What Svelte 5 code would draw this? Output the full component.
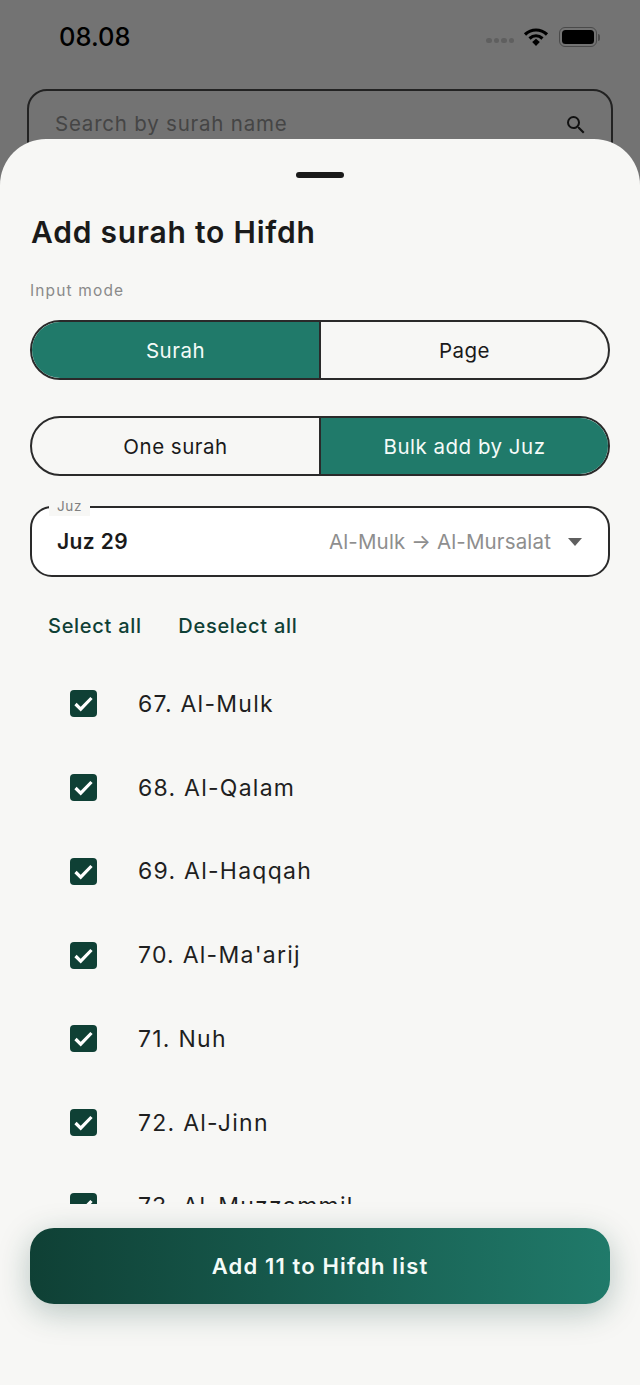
<script>
  const surahs = ['67. Al-Mulk','68. Al-Qalam','69. Al-Haqqah',"70. Al-Ma'arij",'71. Nuh','72. Al-Jinn','73. Al-Muzzammil'];
</script>

<div class="screen">
  <div class="backdrop">
    <div class="status">
      <span class="time">08.08</span>
      <div class="status-icons">
        <div class="dots"><i></i><i></i><i></i><i></i></div>
        <svg class="wifi" width="26" height="20" viewBox="0 0 26 20"><path d="M2 7.5C8.5 1.5 17.5 1.5 24 7.5" fill="none" stroke="#000" stroke-width="3.2"/><path d="M6.5 11.5C10.5 8 15.5 8 19.5 11.5" fill="none" stroke="#000" stroke-width="3.2"/><path d="M9.2 15L13 11.8 16.8 15 13 19z" fill="#000"/></svg>
        <div class="battery"><div class="cell"></div></div>
        <div class="nub"></div>
      </div>
    </div>
    <div class="search">
      <span>Search by surah name</span>
      <svg width="24" height="24" viewBox="0 0 24 24"><path d="M15.5 14h-.79l-.28-.27A6.47 6.47 0 0 0 16 9.5 6.5 6.5 0 1 0 9.5 16c1.61 0 3.09-.59 4.23-1.57l.27.28v.79l5 4.99L20.49 19l-4.99-5zm-6 0C7.01 14 5 11.99 5 9.5S7.01 5 9.5 5 14 7.01 14 9.5 11.99 14 9.5 14z" fill="#111"/></svg>
    </div>
  </div>

  <div class="sheet">
    <div class="handle"></div>
    <h1>Add surah to Hifdh</h1>
    <div class="label">Input mode</div>
    <div class="seg first">
      <div class="opt on">Surah</div>
      <div class="opt">Page</div>
    </div>
    <div class="seg second">
      <div class="opt">One surah</div>
      <div class="opt on">Bulk add by Juz</div>
    </div>
    <div class="juz">
      <span class="juz-label">Juz</span>
      <span class="juz-value">Juz 29</span>
      <span class="juz-range">Al-Mulk → Al-Mursalat</span>
      <span class="caret"></span>
    </div>
    <div class="actions">
      <span>Select all</span>
      <span>Deselect all</span>
    </div>
    <div class="list">
      {#each surahs as s}
        <div class="row">
          <div class="check">
            <svg width="27" height="27" viewBox="0 0 27 27"><path d="M5.5 14l5.2 5.2L21.5 8" fill="none" stroke="#fff" stroke-width="3.2"/></svg>
          </div>
          <span>{s}</span>
        </div>
      {/each}
    </div>
    <div class="footer">
      <div class="cta">Add 11 to Hifdh list</div>
    </div>
  </div>
</div>

<style>
  :global(body) { margin: 0; }
  .screen {
    position: relative;
    width: 640px;
    height: 1385px;
    overflow: hidden;
    background: #737373;
    font-family: Inter, "Noto Sans", sans-serif;
    color: #1a1a1a;
  }
  .backdrop { padding: 0 27px 0 27px; }
  .status {
    height: 89px;
    box-sizing: border-box;
    padding: 20px 13px 0 32px;
    display: flex;
    justify-content: space-between;
    align-items: flex-start;
  }
  .time { font-size: 25.5px; line-height: 34px; font-weight: 500; color: #000; }
  .status-icons { display: flex; align-items: center; height: 34px; }
  .dots { display: flex; gap: 2px; margin-top: 7px; margin-right: 9px; }
  .dots i { width: 5.5px; height: 5.5px; border-radius: 50%; background: #5f5f5f; }
  .wifi { margin-right: 10px; }
  .battery {
    width: 38px; height: 20px; box-sizing: border-box;
    border: 1.5px solid #4a4a4a; border-radius: 6px; padding: 2px;
  }
  .cell { height: 100%; background: #000; border-radius: 3.5px; }
  .nub { width: 2px; height: 7px; background: #4a4a4a; border-radius: 0 2px 2px 0; margin-left: 1px; }
  .search {
    height: 90px;
    box-sizing: border-box;
    border: 2px solid #222;
    border-radius: 20px;
    padding: 19px 23px 0 26px;
    display: flex;
    justify-content: space-between;
    align-items: flex-start;
    font-size: 20.5px;
    line-height: 28px;
    letter-spacing: 0.78px;
    color: #454545;
  }
  .search svg { margin-top: 3px; }
  .sheet {
    position: absolute;
    left: 0; right: 0; top: 139px; bottom: 0;
    background: #f7f7f5;
    border-radius: 46px 46px 0 0;
    padding: 33px 30px 0;
    display: flex;
    flex-direction: column;
  }
  .handle { width: 48px; height: 6px; border-radius: 3px; background: #1a1a1a; align-self: center; }
  h1 {
    margin: 32px 0 0;
    font-size: 30px;
    line-height: 44px;
    font-weight: 600;
    letter-spacing: 0.8px;
    color: #1a1a1a;
    padding-left: 1px;
  }
  .label { margin-top: 26px; font-size: 15.5px; line-height: 22px; letter-spacing: 1.15px; color: #8a8a8a; }
  .seg {
    display: flex;
    box-sizing: border-box;
    height: 60px;
    border: 2px solid #2a2a2a;
    border-radius: 30px;
    overflow: hidden;
  }
  .first { margin-top: 18px; }
  .second { margin-top: 36px; }
  .opt {
    flex: 1 1 0;
    display: flex; align-items: center; justify-content: center;
    font-size: 20.5px;
    letter-spacing: 0.5px;
    color: #1a1a1a;
  }
  .opt + .opt { border-left: 2px solid #2a2a2a; }
  .opt.on { background: #207a6a; color: #f4fbf8; }
  .juz {
    position: relative;
    margin-top: 30px;
    height: 71px;
    box-sizing: border-box;
    background: #fff;
    border: 2px solid #2a2a2a;
    border-radius: 22px;
    padding: 0 26px 0 25px;
    display: flex;
    align-items: center;
  }
  .juz-label {
    position: absolute;
    left: 17px; top: -12px;
    padding: 0 8px;
    background: #f7f7f5;
    font-size: 13.5px;
    line-height: 20px;
    letter-spacing: 0.6px;
    color: #808080;
  }
  .juz-value { font-size: 21px; font-weight: 600; letter-spacing: 0.4px; }
  .juz-range { margin-left: auto; font-size: 20.5px; letter-spacing: 0.15px; color: #8e8e8e; }
  .caret {
    margin-left: 17px;
    width: 0; height: 0;
    border-left: 7.5px solid transparent;
    border-right: 7.5px solid transparent;
    border-top: 8px solid #5f5f5f;
  }
  .actions {
    display: flex;
    gap: 36.5px;
    padding-left: 18px;
    margin-top: 34px;
    height: 30px;
    align-items: center;
    font-size: 20px;
    font-weight: 500;
    letter-spacing: 0.72px;
    color: #0f4035;
  }
  .list {
    margin-top: 21px;
    height: 542px;
    overflow: hidden;
    flex: none;
  }
  .row {
    height: 83.75px;
    display: flex;
    align-items: center;
    padding-left: 40px;
    font-size: 23px;
    letter-spacing: 1.25px;
    color: #1f1f1f;
  }
  .check {
    width: 27px; height: 27px;
    background: #0f4035;
    border-radius: 4px;
    margin-right: 41px;
    display: flex;
  }
  .footer { margin-top: 24px; }
  .cta {
    height: 76px;
    border-radius: 24px;
    background: linear-gradient(90deg, #0f4035, #207a6a);
    box-shadow: 0 8px 32px rgba(15, 64, 53, 0.28);
    color: #f4fbf8;
    display: flex; align-items: center; justify-content: center;
    font-size: 22px;
    font-weight: 600;
    letter-spacing: 1.15px;
  }
</style>
